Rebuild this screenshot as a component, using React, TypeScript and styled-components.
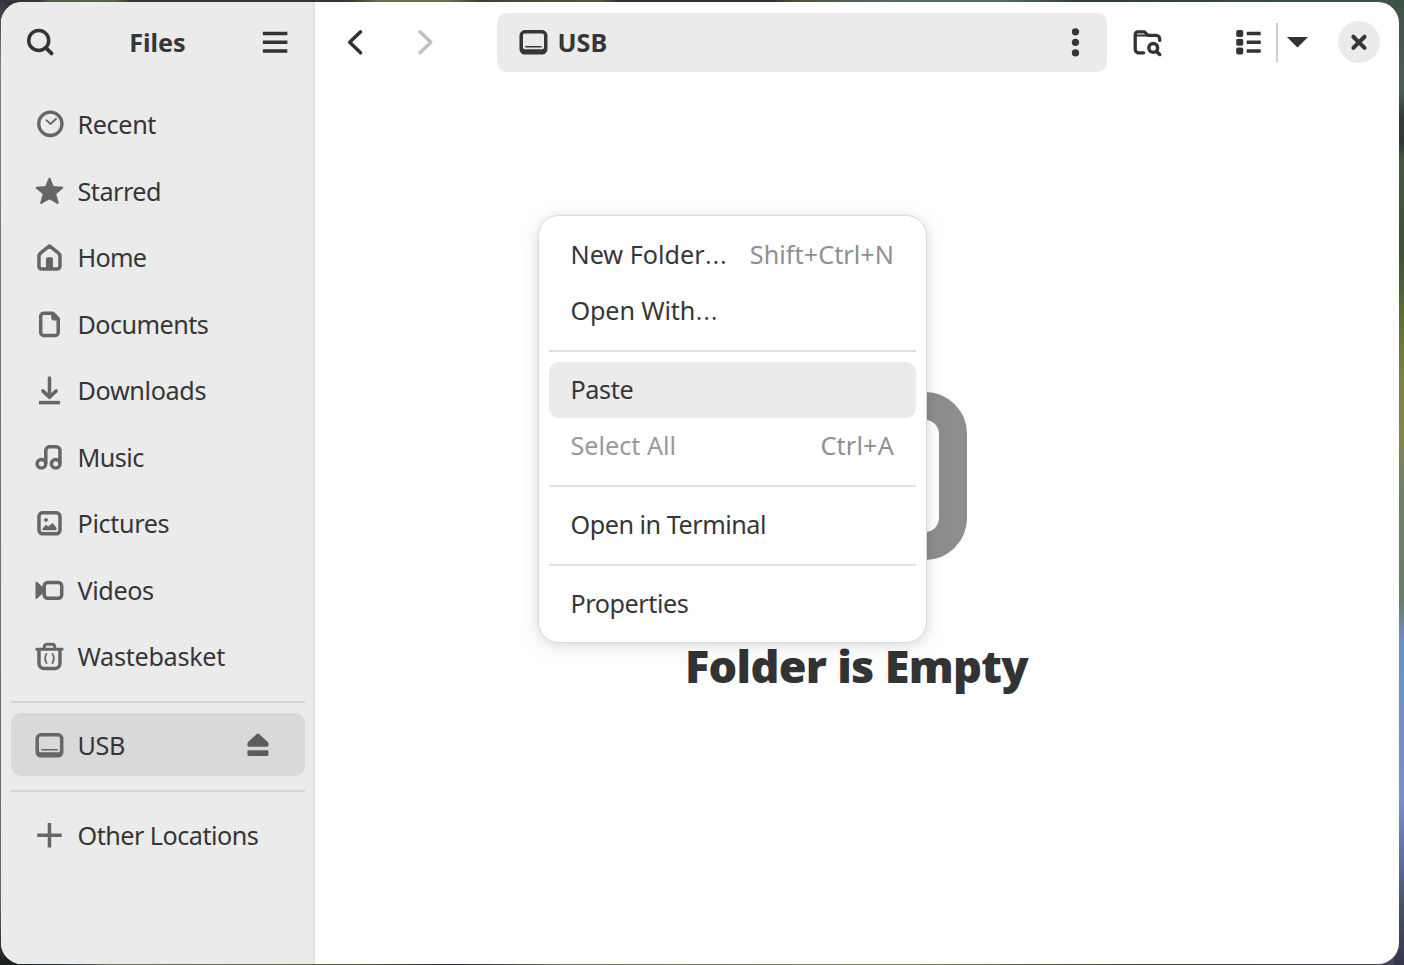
import React from "react";
import styled, { createGlobalStyle } from "styled-components";

const Global = createGlobalStyle`
  * { box-sizing: border-box; }
  html, body { margin: 0; height: 965px; overflow: hidden; }
  body { font-family: "Noto Sans", "Open Sans", sans-serif; font-size: 25.2px; color: #363636; }
  button { font: inherit; color: inherit; border: 0; background: none; padding: 0; }
  svg { display: block; overflow: visible; }
`;

const Desktop = styled.div`
  width: 1404px;
  height: 965px;
  padding: 2px 5px 1px 1px;
  background:
    linear-gradient(180deg, #3d5247 0, #49605a 90px, #2f3b3a 118px, #2f3a36 142px, #44583f 160px, #3c5230 250px, #5c6f3e 320px, #7a8048 375px, #85834f 430px, #6f8260 480px, #66806a 600px, #6f8fc0 640px, #7390c8 800px, #5a7498 860px, #455670 900px, #34364a 965px) right / 10px 100% no-repeat,
    linear-gradient(180deg, #33343f 0, #7d7a88 60px, #76747c 300px, #66666a 900px, #1c1e1c 965px) left / 5px 100% no-repeat,
    linear-gradient(90deg, #33343c 0, #33343c 40px, #4f5f4a 48px, #55664a 115px, #33382c 130px, #33382c 350px, #66744c 380px, #66704a 450px, #3a4030 480px, #4d5a40 600px, #2c2f38 620px, #2c2f38 770px, #4b5a3c 800px, #56666a 900px, #566a6c 1000px, #2f3c38 1080px, #3f5548 1404px) top / 100% 20px no-repeat,
    linear-gradient(90deg, #1c1e1c 0, #2a3540 60px, #6a6c58 110px, #5a6040 350px, #2a2a30 450px, #6a7060 560px, #7a8048 900px, #45423a 1150px, #4a4558 1404px);
`;

const Window = styled.div`
  position: relative;
  display: flex;
  height: 962px;
  border-radius: 21px;
  overflow: hidden;
  background: #fff;
`;

const Sidebar = styled.aside`
  width: 314px;
  flex: none;
  background: #ebebeb;
  border-right: 2px solid #e0e0e0;
`;

const SideHeader = styled.header`
  height: 90px;
  padding: 0 24px 10px 25px;
  display: flex;
  align-items: center;
  justify-content: space-between;
`;

const Label = styled.span<{ $ls?: number }>`
  white-space: pre;
  line-height: 36px;
  letter-spacing: ${(p) => p.$ls ?? 0}px;
`;

const Strong = styled(Label)`
  font-weight: 700;
  padding-bottom: 1px;
`;

const Places = styled.nav`
  padding: 0.5px 8.5px 0 10px;
`;

const Row = styled.div<{ $active?: boolean }>`
  height: 63px;
  margin-bottom: 3.5px;
  padding: 0 33px 0 24px;
  display: flex;
  align-items: center;
  gap: 14.5px;
  border-radius: 10px;
  background: ${(p) => (p.$active ? "#d9d9d9" : "transparent")};
`;

const RowIcon = styled.span`
  flex: none;
  color: #666;
`;

const Eject = styled.button`
  margin-left: auto;
  color: #5c5c5c;
`;

const Rule = styled.hr<{ $gap: string }>`
  height: 2px;
  border: 0;
  margin: ${(p) => p.$gap};
  background: #d4d4d4;
`;

const Main = styled.main`
  flex: 1;
  display: flex;
  flex-direction: column;
`;

const Toolbar = styled.header`
  height: 80px;
  padding: 0 19.5px 0 26px;
  display: flex;
  align-items: center;
`;

const Tool = styled.button<{ $left?: number; $dim?: boolean }>`
  flex: none;
  margin-left: ${(p) => p.$left ?? 0}px;
  color: ${(p) => (p.$dim ? "#c1c1c1" : "#333")};
`;

const PathBar = styled.div`
  width: 610px;
  height: 59px;
  margin-left: 57px;
  padding: 0 18px 0 22px;
  display: flex;
  align-items: center;
  gap: 11px;
  border-radius: 10px;
  background: #ebebeb;
`;

const Spacer = styled.div`
  flex: 1;
`;

const SplitLine = styled.div`
  width: 1.5px;
  height: 39px;
  margin-left: 14px;
  background: #cfcfcf;
`;

const Close = styled.button`
  width: 42px;
  height: 42px;
  display: grid;
  place-items: center;
  border-radius: 50%;
  background: #ebebeb;
`;

const Empty = styled.section`
  flex: 1;
  display: flex;
  flex-direction: column;
  align-items: center;
  padding-top: 268px;
  color: #8e8e8e;
`;

const EmptyArt = styled.div`
  margin-right: 4px;
`;

const EmptyTitle = styled.h1`
  margin: 59px 1px 0 0;
  font-size: 45px;
  line-height: 66px;
  font-weight: 900;
  color: #333;
  letter-spacing: -0.7px;
  white-space: nowrap;
`;

const Menu = styled.div`
  position: absolute;
  left: 537px;
  top: 213px;
  width: 389px;
  height: 428px;
  padding: 11px 10.5px 11px 10px;
  border: 1.5px solid #dcdcdc;
  border-radius: 21px;
  background: #fff;
  background-clip: padding-box;
  box-shadow: 0 2px 9px 1px rgba(0, 0, 0, 0.09), 0 4px 25px 5px rgba(0, 0, 0, 0.05);
`;

const Item = styled.div<{ $active?: boolean; $dim?: boolean }>`
  height: 56px;
  padding: 0 21.5px 1.4px;
  display: flex;
  align-items: center;
  justify-content: space-between;
  border-radius: 10px;
  color: ${(p) => (p.$dim ? "#999" : "#363636")};
  background: ${(p) => (p.$active ? "#ebebeb" : "transparent")};
`;

const Ellipsis = styled.span`
  font-size: 31px;
  font-weight: 300;
  line-height: 0;
`;

const Accel = styled(Label)`
  color: #8f8f8f;
`;

const MenuRule = styled.hr`
  height: 2px;
  border: 0;
  margin: 10.5px 0;
  background: #e0e0e0;
`;

const Icon = ({ children }: { children: React.ReactNode }) => (
  <svg width="28" height="28" viewBox="0 0 16 16" fill="none" stroke="currentColor" strokeWidth="2">
    <g transform="translate(.27 .2)">{children}</g>
  </svg>
);

const Drive = () => (
  <Icon>
    <path fill="currentColor" fillRule="evenodd" stroke="none" d="M3 1h10a3 3 0 0 1 3 3v8a3 3 0 0 1-3 3H3a3 3 0 0 1-3-3V4a3 3 0 0 1 3-3zM3 2.9a1 1 0 0 0-1 1V11a1 1 0 0 0 1 1h10a1 1 0 0 0 1-1V3.9a1 1 0 0 0-1-1z" />
    <path strokeWidth="0.9" strokeLinecap="round" d="M3.6 10.5h8.8" />
  </Icon>
);

const icons: Record<string, React.ReactNode> = {
  recent: (
    <Icon>
      <circle cx="8.5" cy="7.700" r="6.65" strokeWidth="1.9" />
      <path strokeWidth="1" strokeLinecap="round" strokeLinejoin="round" d="M6.2 5.6l2.4 2.2 3.2-3" />
    </Icon>
  ),
  star: (
    <Icon>
      <path fill="currentColor" strokeWidth="1.2" strokeLinejoin="round" d="M8 .8l1.9 4.700 5.400.4-4.100 3.500 1.500 5.200L8 11.900l-4.700 2.700 1.500-5.200L.7 5.900l5.400-.4z" />
    </Icon>
  ),
  home: (
    <Icon>
      <path strokeLinejoin="round" d="M8 1.500L13 5.400c.7.6 1 1.200 1 2V13.100a1.600 1.600 0 0 1-1.600 1.600H3.600A1.600 1.600 0 0 1 2 13.100V7.400c0-.8.3-1.400 1-2z" />
      <path fill="currentColor" stroke="none" d="M6 15V9a1 1 0 0 1 1-1h2a1 1 0 0 1 1 1v6z" />
    </Icon>
  ),
  document: (
    <Icon>
      <path strokeLinejoin="round" d="M4.700 1.700h5.200L13 4.800V12.600a1.700 1.700 0 0 1-1.700 1.700H4.700A1.700 1.700 0 0 1 3 12.600V3.400a1.700 1.700 0 0 1 1.700-1.700z" />
      <path fill="currentColor" stroke="none" d="M9 1.500V4.400a1.400 1.400 0 0 0 1.400 1.400H13.500z" />
    </Icon>
  ),
  download: (
    <Icon>
      <path strokeLinecap="round" strokeLinejoin="round" d="M8 1v10M4.200 8.300L8 12l3.800-3.700" />
      <path d="M2 15h12" />
    </Icon>
  ),
  music: (
    <Icon>
      <circle cx="3.400" cy="11.700" r="2.450" />
      <circle cx="11.550" cy="11.700" r="2.450" />
      <path strokeLinejoin="round" d="M5.900 11.700V4a2 2 0 0 1 2-2H12a2 2 0 0 1 2 2v7.700" />
    </Icon>
  ),
  picture: (
    <Icon>
      <rect x="2" y="2" width="12" height="12" rx="2" />
      <circle cx="6" cy="6" r="1.100" fill="currentColor" stroke="none" />
      <path fill="currentColor" stroke="none" d="M4 12v-1l2-2.200 1.300 1L9.800 7.800 12 10.500V12z" />
    </Icon>
  ),
  video: (
    <Icon>
      <rect x="5" y="3.500" width="10" height="9" rx="2" />
      <path fill="currentColor" stroke="none" d="M0 3.600c0-.6.5-.7 1-.3L5 7v2l-4 3.700c-.5.400-1 .3-1-.3z" />
    </Icon>
  ),
  trash: (
    <Icon>
      <path d="M2 4.500v7.500a3 3 0 0 0 3 3h6a3 3 0 0 0 3-3V4.500" />
      <path strokeWidth="1.700" strokeLinecap="round" d="M.8 3.900h14.400" />
      <path strokeWidth="1.700" d="M5 3.600V2.600A1.500 1.500 0 0 1 6.500 1.100h3A1.500 1.500 0 0 1 11 2.600v1" />
      <path strokeWidth="1" strokeLinecap="round" d="M6.300 6.600Q4.700 9.100 6.300 11.900M9.700 6.600Q11.300 9.100 9.700 11.900" />
    </Icon>
  ),
  plus: (
    <Icon>
      <path d="M8 1v14M1 8h14" />
    </Icon>
  ),
};

const places: [string, string, number][] = [
  ["recent", "Recent", -0.38],
  ["star", "Starred", -0.5],
  ["home", "Home", -0.7],
  ["document", "Documents", -0.55],
  ["download", "Downloads", -0.36],
  ["music", "Music", -0.55],
  ["picture", "Pictures", -0.36],
  ["video", "Videos", -0.4],
  ["trash", "Wastebasket", -0.3],
];

export default function App() {
  return (
    <Desktop>
      <Global />
      <Window>
        <Sidebar>
          <SideHeader>
            <Tool>
              <Icon>
                <circle cx="7" cy="6.900" r="5.700" />
                <path strokeWidth="2.200" strokeLinecap="round" d="M11.100 11.100l3.200 3.200" />
              </Icon>
            </Tool>
            <Strong>Files</Strong>
            <Tool>
              <Icon>
                <path d="M.8 3h14M.8 8h14M.8 13h14" />
              </Icon>
            </Tool>
          </SideHeader>
          <Places>
            {places.map(([icon, name, ls]) => (
              <Row key={name}>
                <RowIcon>{icons[icon]}</RowIcon>
                <Label $ls={ls}>{name}</Label>
              </Row>
            ))}
            <Rule $gap="13.5px 0 10px" />
            <Row $active>
              <RowIcon><Drive /></RowIcon>
              <Label $ls={-0.4}>USB</Label>
              <Eject>
                <Icon>
                  <path fill="currentColor" stroke="none" d="M6.900 1.600q.8-.7 1.600 0l4.700 4.400q.5.500.5 1V8q0 .8-.8.800H2.500Q1.700 8.800 1.700 8V7q0-.5.500-1z" />
                  <rect x="1.700" y="10.800" width="12" height="3.300" rx=".8" fill="currentColor" stroke="none" />
                </Icon>
              </Eject>
            </Row>
            <Rule $gap="14px 0 11px" />
            <Row>
              <RowIcon>{icons.plus}</RowIcon>
              <Label $ls={-0.52}>Other Locations</Label>
            </Row>
          </Places>
        </Sidebar>
        <Main>
          <Toolbar>
            <Tool>
              <Icon>
                <path strokeLinecap="round" strokeLinejoin="round" d="M10.900 2L4.700 8l6.200 6" />
              </Icon>
            </Tool>
            <Tool $left={42.5} $dim>
              <Icon>
                <path strokeLinecap="round" strokeLinejoin="round" d="M4.300 2L10.500 8l-6.200 6" />
              </Icon>
            </Tool>
            <PathBar>
              <Drive />
              <Strong>USB</Strong>
              <Spacer />
              <Icon>
                <g fill="currentColor" stroke="none">
                  <circle cx="8" cy="2" r="2.100" />
                  <circle cx="8" cy="8" r="2.100" />
                  <circle cx="8" cy="14" r="2.100" />
                </g>
              </Icon>
            </PathBar>
            <Tool $left={26.5}>
              <Icon>
                <path strokeWidth="1.900" strokeLinecap="round" strokeLinejoin="round" d="M5.800 14H3a2 2 0 0 1-2-2V3.500A1.500 1.500 0 0 1 2.500 2H6.300L8.300 4H13a2 2 0 0 1 2 2v.9" />
                <path strokeWidth="1.100" d="M1.500 4.100H8.500" />
                <circle cx="11.300" cy="11.200" r="2.500" />
                <path strokeLinecap="round" d="M13.200 13.200l1.800 1.700" />
              </Icon>
            </Tool>
            <Tool $left={73}>
              <Icon>
                <g fill="currentColor" stroke="none">
                  <rect x="1" y="1" width="4" height="4" rx="1" />
                  <rect x="1" y="6" width="4" height="4" rx="1" />
                  <rect x="1" y="11" width="4" height="4" rx="1" />
                </g>
                <path d="M7 3h8M7 8h8M7 13h8" />
              </Icon>
            </Tool>
            <SplitLine />
            <Tool $left={5}>
              <Icon>
                <path fill="currentColor" stroke="none" d="M2 5h12L8 11z" />
              </Icon>
            </Tool>
            <Spacer />
            <Close>
              <Icon>
                <path strokeWidth="2.300" strokeLinecap="round" d="M4.500 4.800l6.400 6.400M10.900 4.800l-6.400 6.400" />
              </Icon>
            </Close>
          </Toolbar>
          <Empty>
            <EmptyArt>
              <svg width="224" height="224" viewBox="0 0 16 16" fill="none" stroke="currentColor" strokeWidth="2">
                <path d="M4 2h2.600l2 2H13a2 2 0 0 1 2 2v6a2 2 0 0 1-2 2H3a2 2 0 0 1-2-2V4a2 2 0 0 1 2-2z" />
              </svg>
            </EmptyArt>
            <EmptyTitle>Folder is Empty</EmptyTitle>
          </Empty>
        </Main>
        <Menu>
          <Item><Label>New Folder<Ellipsis>…</Ellipsis></Label><Accel $ls={0.06}>Shift+Ctrl+N</Accel></Item>
          <Item><Label $ls={-0.15}>Open With<Ellipsis>…</Ellipsis></Label></Item>
          <MenuRule />
          <Item $active><Label $ls={-0.4}>Paste</Label></Item>
          <Item $dim><Label>Select All</Label><Accel $ls={0.2}>Ctrl+A</Accel></Item>
          <MenuRule />
          <Item><Label $ls={-0.48}>Open in Terminal</Label></Item>
          <MenuRule />
          <Item><Label $ls={-0.45}>Properties</Label></Item>
        </Menu>
      </Window>
    </Desktop>
  );
}
